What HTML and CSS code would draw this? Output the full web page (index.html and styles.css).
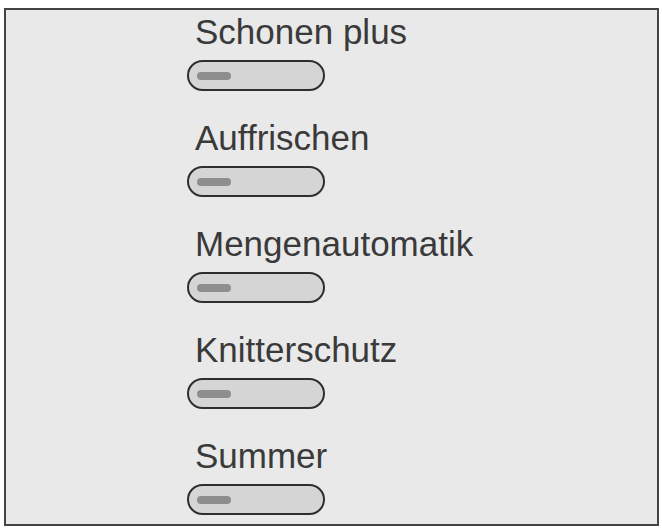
FILE: index.html
```html
<!DOCTYPE html>
<html lang="de">
<head>
    <meta charset="UTF-8">
    <meta name="viewport" content="width=device-width, initial-scale=1.0">
    <title>Optionen</title>
    <link rel="stylesheet" href="styles.css">
</head>
<body>
    <div class="options-panel">
        <div class="option">
            <div class="option-label">Schonen plus</div>
            <div class="switch"><span class="switch-knob"></span></div>
        </div>
        <div class="option">
            <div class="option-label">Auffrischen</div>
            <div class="switch"><span class="switch-knob"></span></div>
        </div>
        <div class="option">
            <div class="option-label">Mengenautomatik</div>
            <div class="switch"><span class="switch-knob"></span></div>
        </div>
        <div class="option">
            <div class="option-label">Knitterschutz</div>
            <div class="switch"><span class="switch-knob"></span></div>
        </div>
        <div class="option">
            <div class="option-label">Summer</div>
            <div class="switch"><span class="switch-knob"></span></div>
        </div>
    </div>
</body>
</html>
```

FILE: styles.css
```css
* {
    box-sizing: border-box;
}
body, html {
    margin: 0;
    padding: 0;
    background-color: #ffffff;
    font-family: "Liberation Sans", Arial, sans-serif;
}
.options-panel {
    margin: 8px 0 0 4px;
    width: 655px;
    height: 518px;
    border: 2px solid #444444;
    background-color: #e9e9e9;
    padding: 2px 0 0 181px;
    display: flex;
    flex-direction: column;
    gap: 27px;
}
.option {
    display: flex;
    flex-direction: column;
    align-items: flex-start;
}
.option-label {
    margin-left: 8px;
    font-size: 35px;
    line-height: 40px;
    color: #3a3a3a;
}
.switch {
    margin-top: 8px;
    width: 138px;
    height: 31px;
    border: 2.5px solid #2e2e2e;
    border-radius: 16px;
    background-color: #d5d5d5;
    display: flex;
    align-items: center;
    padding: 1px 0 0 8px;
}
.switch-knob {
    width: 34px;
    height: 8px;
    border-radius: 4px;
    background-color: #8e8e8e;
}
```
